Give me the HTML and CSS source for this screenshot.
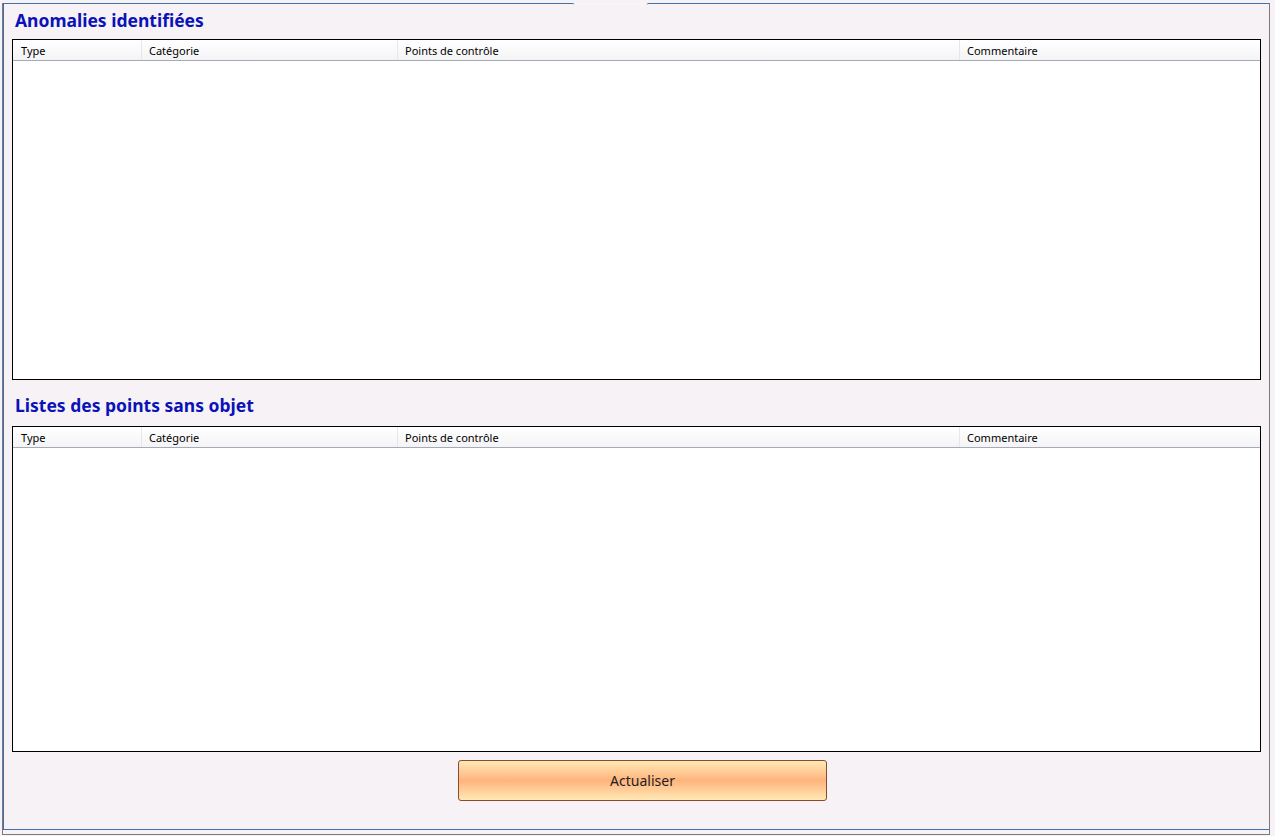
FILE: index.html
```html
<!DOCTYPE html>
<html lang="fr">
<head>
    <meta charset="UTF-8">
    <meta name="viewport" content="width=device-width, initial-scale=1.0">
    <title>Anomalies identifiées</title>
    <link rel="stylesheet" href="styles.css">
</head>
<body>
    <div class="window">
        <!-- bas de l'onglet actif, au-dessus du cadre -->
        <div class="tab-edge"></div>

        <div class="panel">
            <h2 class="section-title">Anomalies identifiées</h2>

            <div class="grid grid-anomalies">
                <div class="grid-header">
                    <div class="col col-type">Type</div>
                    <div class="col col-cat">Catégorie</div>
                    <div class="col col-points">Points de contrôle</div>
                    <div class="col col-comment">Commentaire</div>
                </div>
                <div class="grid-body"></div>
            </div>

            <h2 class="section-title second">Listes des points sans objet</h2>

            <div class="grid grid-sans-objet">
                <div class="grid-header">
                    <div class="col col-type">Type</div>
                    <div class="col col-cat">Catégorie</div>
                    <div class="col col-points">Points de contrôle</div>
                    <div class="col col-comment">Commentaire</div>
                </div>
                <div class="grid-body"></div>
            </div>

            <div class="actions">
                <button class="button-refresh">Actualiser</button>
            </div>
        </div>
    </div>
</body>
</html>
```

FILE: styles.css
```css
body {
    margin: 0;
    background-color: #f6f2f5;
    font-family: "Noto Sans", "Open Sans", sans-serif;
}

/* cadre extérieur gris */
.window {
    position: relative;
    margin-left: 2px;
    width: 1266px;
    height: 831px;
    border-left: 1px solid #7c7880;
    border-right: 1px solid #7c7880;
    border-bottom: 1px solid #7c7880;
}

.tab-edge {
    position: absolute;
    top: 0;
    left: 570px;
    width: 73px;
    height: 2px;
    border-left: 1px solid #a0a4ac;
    border-right: 1px solid #a0a4ac;
    border-radius: 0 0 3px 3px;
    background-color: #f4f6fa;
}

/* panneau avec le liseré bleu */
.panel {
    margin-top: 3px;
    height: 825px;
    border-top: 1px solid #3f72a8;
    border-left: 1px solid #3f72a8;
    border-bottom: 1px solid #3f72a8;
    padding: 0 8px;
    box-sizing: content-box;
}

.section-title {
    margin: 0;
    padding-left: 3px;
    height: 35px;
    line-height: 32px;
    font-size: 17.5px;
    font-weight: bold;
    color: #0a12b8;
}

.section-title.second {
    height: 46px;
    line-height: 50px;
}

.grid {
    border: 1px solid #000000;
    background-color: #ffffff;
    box-sizing: border-box;
    display: flex;
    flex-direction: column;
}

.grid-anomalies {
    height: 341px;
}

.grid-sans-objet {
    height: 326px;
}

.grid-header {
    display: flex;
    height: 20px;
    border-bottom: 1px solid #a4abb4;
    background: linear-gradient(#ffffff, #f4f4f6);
}

.col {
    font-size: 11px;
    line-height: 22px;
    color: #000000;
    padding-left: 7px;
    border-right: 1px solid #e4e8ee;
    box-sizing: border-box;
}

.col-type { width: 129px; padding-left: 8px; }
.col-cat { width: 256px; }
.col-points { width: 562px; }
.col-comment { flex: 1; border-right: none; }

.grid-body {
    flex: 1;
}

.actions {
    padding-top: 8px;
}

.button-refresh {
    margin-left: 446px;
    width: 369px;
    height: 41px;
    border: 1px solid #8a4a2c;
    border-radius: 3px;
    background: linear-gradient(#ffe9b4, #ffb47e 50%, #ffe9b4);
    font-family: "Noto Sans", "Open Sans", sans-serif;
    font-size: 14px;
    color: #1e1e1e;
    cursor: pointer;
}
```
